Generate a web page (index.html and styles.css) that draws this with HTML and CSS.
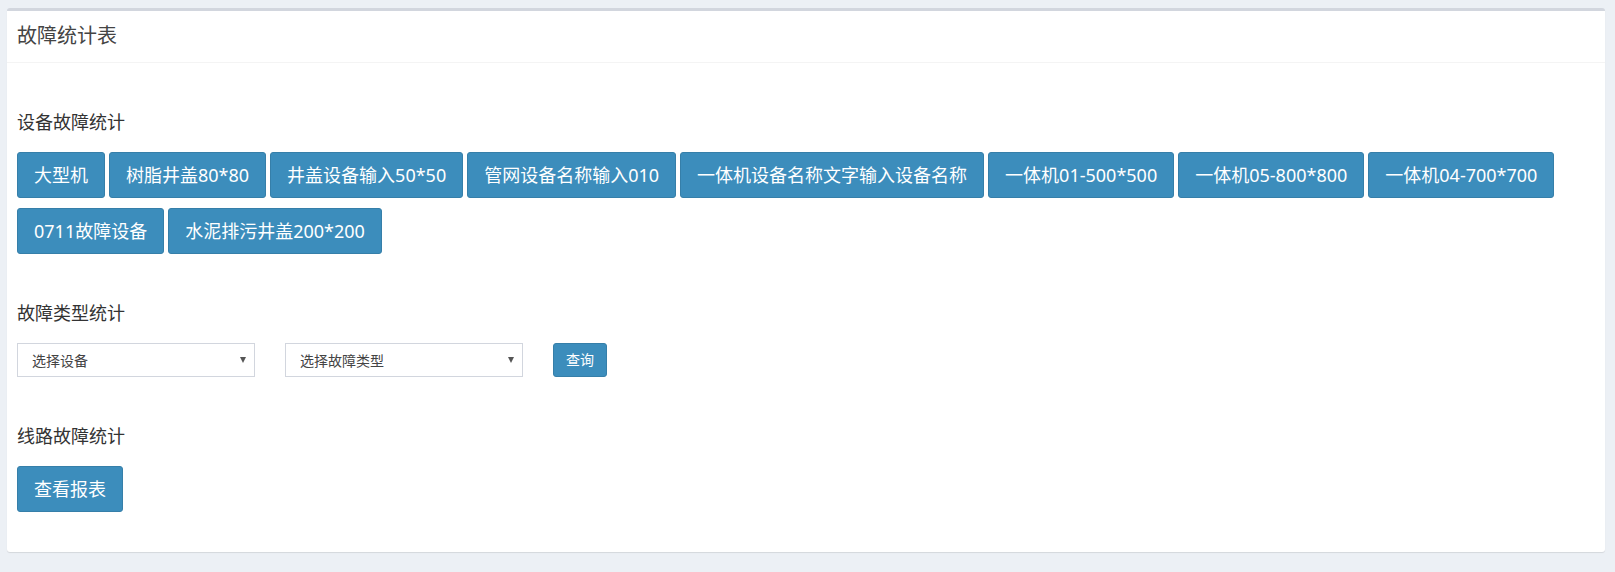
FILE: index.html
```html
<!DOCTYPE html>
<html lang="zh-CN">
<head>
    <meta charset="UTF-8">
    <title>故障统计表</title>
    <link rel="stylesheet" href="styles.css">
</head>
<body>
    <div class="content">
        <div class="box">
            <div class="box-header">
                <h3 class="box-title">故障统计表</h3>
            </div>
            <div class="box-body">
                <div class="section">
                    <h4 class="section-title">设备故障统计</h4>
                    <div class="btn-list">
                        <button class="btn btn-lg">大型机</button>
                        <button class="btn btn-lg">树脂井盖80*80</button>
                        <button class="btn btn-lg">井盖设备输入50*50</button>
                        <button class="btn btn-lg">管网设备名称输入010</button>
                        <button class="btn btn-lg">一体机设备名称文字输入设备名称</button>
                        <button class="btn btn-lg">一体机01-500*500</button>
                        <button class="btn btn-lg">一体机05-800*800</button>
                        <button class="btn btn-lg">一体机04-700*700</button>
                        <button class="btn btn-lg">0711故障设备</button>
                        <button class="btn btn-lg">水泥排污井盖200*200</button>
                    </div>
                </div>
                <div class="section">
                    <h4 class="section-title">故障类型统计</h4>
                    <div class="filter-row">
                        <div class="select-wrap">
                            <select class="form-select">
                                <option>选择设备</option>
                            </select>
                        </div>
                        <div class="select-wrap">
                            <select class="form-select">
                                <option>选择故障类型</option>
                            </select>
                        </div>
                        <button class="btn">查询</button>
                    </div>
                </div>
                <div class="section">
                    <h4 class="section-title">线路故障统计</h4>
                    <div class="btn-list">
                        <button class="btn btn-lg">查看报表</button>
                    </div>
                </div>
            </div>
        </div>
    </div>
</body>
</html>
```

FILE: styles.css
```css
html, body {
    margin: 0;
    padding: 0;
}
body {
    font-family: "Noto Sans", "Noto Sans CJK SC", sans-serif;
    background-color: #ecf0f5;
    color: #333;
}
.content {
    padding: 8px 10px 20px 7px;
}
.box {
    background: #ffffff;
    border-top: 3px solid #d2d6de;
    border-radius: 3px;
    box-shadow: 0 1px 1px rgba(0, 0, 0, 0.1);
}
.box-header {
    padding: 9px 10px 11px;
    border-bottom: 1px solid #f4f4f4;
}
.box-title {
    margin: 0;
    font-size: 20px;
    font-weight: normal;
    line-height: 31px;
    color: #444;
}
.box-body {
    padding: 49px 10px 40px;
    display: flex;
    flex-direction: column;
    gap: 49px;
}
.section-title {
    margin: 0 0 20px;
    font-size: 18px;
    font-weight: normal;
    line-height: 20px;
    color: #333;
}
.btn-list {
    display: flex;
    flex-wrap: wrap;
    gap: 10px 4px;
}
.btn {
    font-family: inherit;
    background: #3c8dbc;
    border: 1px solid #367fa9;
    border-radius: 3px;
    color: #fff;
    font-size: 14px;
    line-height: 20px;
    padding: 6px 12px;
    cursor: pointer;
}
.btn-lg {
    font-size: 18px;
    line-height: 24px;
    padding: 10px 16px;
}
.filter-row {
    display: flex;
    align-items: center;
    gap: 30px;
}
.select-wrap {
    position: relative;
    width: 238px;
}
.select-wrap::after {
    content: "";
    position: absolute;
    right: 9px;
    top: 14px;
    border-left: 3.5px solid transparent;
    border-right: 3.5px solid transparent;
    border-top: 6px solid #555;
    pointer-events: none;
}
.form-select {
    display: block;
    width: 100%;
    height: 34px;
    box-sizing: border-box;
    appearance: none;
    -webkit-appearance: none;
    background: #fff;
    border: 1px solid #d2d6de;
    border-radius: 0;
    padding: 0 24px 0 14px;
    font-family: inherit;
    font-size: 14px;
    color: #444;
}
```
